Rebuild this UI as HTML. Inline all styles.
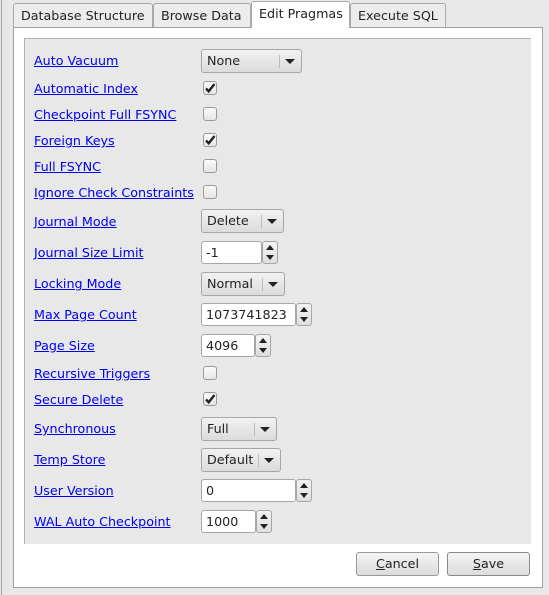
<!DOCTYPE html>
<html><head><style>
*{box-sizing:border-box}
body{margin:0;width:549px;height:595px;background:#e8e8e8;font-family:"DejaVu Sans","Liberation Sans",sans-serif;font-size:12.7px;color:#222;position:relative;overflow:hidden}
.a{position:absolute}
.tab{position:absolute;top:3px;height:25px;border:1px solid #a8a8a8;border-bottom:none;border-radius:3px 3px 0 0;background:#ececec;padding:4px 0 0 7px}
.sel{top:1px;height:27px;background:#fff;z-index:2}
.lbl{position:absolute;left:34px;color:#0000ee;text-decoration:underline;line-height:15px}
.cb{position:absolute;left:203px;width:14px;height:14px;border:1px solid #9a9a9a;border-radius:3px;background:linear-gradient(#fafafa,#e6e6e6)}
.combo{position:absolute;left:201px;height:24px;border:1px solid #a6a6a6;border-radius:3px;background:linear-gradient(#f2f2f2,#dcdcdc);padding:3px 0 0 5px}
.combo .sep{position:absolute;right:21px;top:5px;width:1px;height:13px;background:#bdbdbd}
.combo .ar{position:absolute;right:6px;top:9px;width:0;height:0;border-left:5px solid transparent;border-right:5px solid transparent;border-top:5px solid #222}
.spin{position:absolute;left:201px;height:23px}
.spin .f{position:absolute;left:0;top:0;height:23px;border:1px solid #a6a6a6;border-radius:3px;background:#fff;padding:3px 0 0 4px}
.spin .b{position:absolute;top:0;width:16px;height:23px;border:1px solid #a6a6a6;border-radius:3px;background:linear-gradient(#f4f4f4,#dedede)}
.spin .b:before{content:"";position:absolute;left:3px;top:3px;border-left:4px solid transparent;border-right:4px solid transparent;border-bottom:5px solid #222}
.spin .b:after{content:"";position:absolute;left:3px;top:13px;border-left:4px solid transparent;border-right:4px solid transparent;border-top:5px solid #222}
.btn{position:absolute;top:552px;height:24px;border:1px solid #9a9a9a;border-radius:3px;background:linear-gradient(#f4f4f4,#dcdcdc);text-align:center;padding-top:3px}
</style></head><body>
<div class="a" style="left:1px;top:0;width:1px;height:595px;background:#a0a0a0"></div>
<div class="tab" style="left:13px;width:140px">Database Structure</div>
<div class="tab" style="left:153px;width:98px">Browse Data</div>
<div class="tab sel" style="left:251px;width:99px;border-bottom:none">Edit Pragmas</div>
<div class="tab" style="left:350px;width:96px">Execute SQL</div>
<div class="a" style="left:13px;top:27px;width:530px;height:561px;border:1px solid #a0a0a0;background:#fff"></div>
<div class="a" style="left:24px;top:38px;width:507px;height:506px;border-left:1px solid #b0b0b0;border-top:1px solid #b0b0b0;background:#e8e8e8"></div>

<div class="lbl" style="top:53px">Auto Vacuum</div>
<div class="combo" style="top:49px;width:101px">None<span class="sep"></span><span class="ar"></span></div>
<div class="lbl" style="top:81px">Automatic Index</div>
<div class="cb" style="top:81px"><svg width="12" height="12" viewBox="0 0 12 12" style="position:absolute;left:0;top:0"><path d="M2 6.5L4.7 9.3L10.5 2" fill="none" stroke="#222" stroke-width="2.4"/></svg></div>
<div class="lbl" style="top:107px">Checkpoint Full FSYNC</div>
<div class="cb" style="top:107px"></div>
<div class="lbl" style="top:133px">Foreign Keys</div>
<div class="cb" style="top:133px"><svg width="12" height="12" viewBox="0 0 12 12" style="position:absolute;left:0;top:0"><path d="M2 6.5L4.7 9.3L10.5 2" fill="none" stroke="#222" stroke-width="2.4"/></svg></div>
<div class="lbl" style="top:159px">Full FSYNC</div>
<div class="cb" style="top:159px"></div>
<div class="lbl" style="top:185px">Ignore Check Constraints</div>
<div class="cb" style="top:185px"></div>
<div class="lbl" style="top:214px">Journal Mode</div>
<div class="combo" style="top:209px;width:83px">Delete<span class="sep"></span><span class="ar"></span></div>
<div class="lbl" style="top:245px">Journal Size Limit</div>
<div class="spin" style="top:241px"><div class="f" style="width:61px">-1</div><div class="b" style="left:61px"></div></div>
<div class="lbl" style="top:276px">Locking Mode</div>
<div class="combo" style="top:272px;width:84px">Normal<span class="sep"></span><span class="ar"></span></div>
<div class="lbl" style="top:307px">Max Page Count</div>
<div class="spin" style="top:303px"><div class="f" style="width:95px">1073741823</div><div class="b" style="left:95px"></div></div>
<div class="lbl" style="top:338px">Page Size</div>
<div class="spin" style="top:334px"><div class="f" style="width:54px">4096</div><div class="b" style="left:54px"></div></div>
<div class="lbl" style="top:366px">Recursive Triggers</div>
<div class="cb" style="top:366px"></div>
<div class="lbl" style="top:392px">Secure Delete</div>
<div class="cb" style="top:392px"><svg width="12" height="12" viewBox="0 0 12 12" style="position:absolute;left:0;top:0"><path d="M2 6.5L4.7 9.3L10.5 2" fill="none" stroke="#222" stroke-width="2.4"/></svg></div>
<div class="lbl" style="top:421px">Synchronous</div>
<div class="combo" style="top:417px;width:76px">Full<span class="sep"></span><span class="ar"></span></div>
<div class="lbl" style="top:452px">Temp Store</div>
<div class="combo" style="top:448px;width:80px">Default<span class="sep"></span><span class="ar"></span></div>
<div class="lbl" style="top:483px">User Version</div>
<div class="spin" style="top:479px"><div class="f" style="width:95px">0</div><div class="b" style="left:95px"></div></div>
<div class="lbl" style="top:514px">WAL Auto Checkpoint</div>
<div class="spin" style="top:510px"><div class="f" style="width:55px">1000</div><div class="b" style="left:55px"></div></div>

<div class="btn" style="left:356px;width:83px"><u>C</u>ancel</div>
<div class="btn" style="left:447px;width:83px;border-color:#888"><u>S</u>ave</div>
</body></html>
